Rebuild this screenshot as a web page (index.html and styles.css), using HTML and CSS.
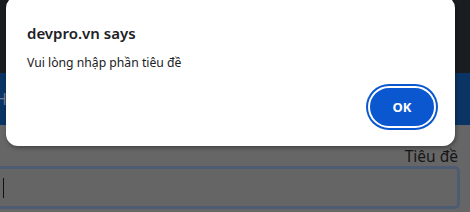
FILE: index.html
```html
<!DOCTYPE html>
<html lang="vi">
<head>
  <meta charset="UTF-8">
  <title>devpro.vn</title>
  <link rel="stylesheet" href="styles.css">
</head>
<body>
  <div class="topbar"></div>
  <div class="navbar"><span class="nav-link">H</span></div>
  <div class="content">
    <label class="field-label" for="title">Tiêu đề</label>
    <div class="field"><span class="caret"></span></div>
  </div>

  <!-- alert dialog -->
  <div class="dialog" role="alertdialog">
    <h2 class="dialog-title">devpro.vn says</h2>
    <p class="dialog-msg">Vui lòng nhập phần tiêu đề</p>
    <div class="dialog-actions">
      <button class="ok-btn">OK</button>
    </div>
  </div>
</body>
</html>
```

FILE: styles.css
```css
body {
  margin: 0;
  background: #666666;
  font-family: "Noto Sans", "DejaVu Sans", sans-serif;
  overflow: hidden;
}
.topbar {
  height: 73px;
  background: #1b1c20;
}
.navbar {
  height: 52px;
  background: #0a3464;
  display: flex;
  align-items: center;
}
.nav-link {
  margin-left: -5px;
  color: #6d7f95;
  font-size: 16px;
}
.content {
  display: flex;
  flex-direction: column;
  align-items: flex-end;
  padding: 21px 10px 0 0;
  margin-left: -6px;
}
.field-label {
  color: #161616;
  font-size: 15.5px;
  line-height: 20px;
  margin-right: 2px;
}
.field {
  box-sizing: border-box;
  width: 100%;
  height: 43px;
  border: 3px solid #4c5c73;
  border-radius: 5px;
  background: #656565;
  display: flex;
  align-items: center;
  padding-left: 6px;
}
.caret {
  width: 1px;
  height: 20px;
  background: #111;
}
.dialog {
  position: absolute;
  left: 6px;
  top: -4px;
  width: 449px;
  height: 150px;
  box-sizing: border-box;
  background: #fff;
  border-radius: 12px;
  box-shadow: 1px 2px 4px rgba(0, 0, 0, 0.35);
  padding: 27px 19px 0 21px;
}
.dialog-title {
  margin: 0;
  font-size: 15px;
  font-weight: 600;
  color: #202124;
  line-height: 20px;
}
.dialog-msg {
  margin: 11px 0 0;
  font-size: 12.2px;
  color: #202124;
  line-height: 18px;
}
.dialog-actions {
  display: flex;
  justify-content: flex-end;
  margin-top: 14px;
}
.ok-btn {
  width: 68px;
  height: 42px;
  border-radius: 21px;
  background: #0b57d0;
  color: #fff;
  border: 2px solid #fff;
  box-shadow: 0 0 0 2px #0b57d0;
  font-family: "Noto Sans", sans-serif;
  font-weight: 700;
  font-size: 13px;
}
```
